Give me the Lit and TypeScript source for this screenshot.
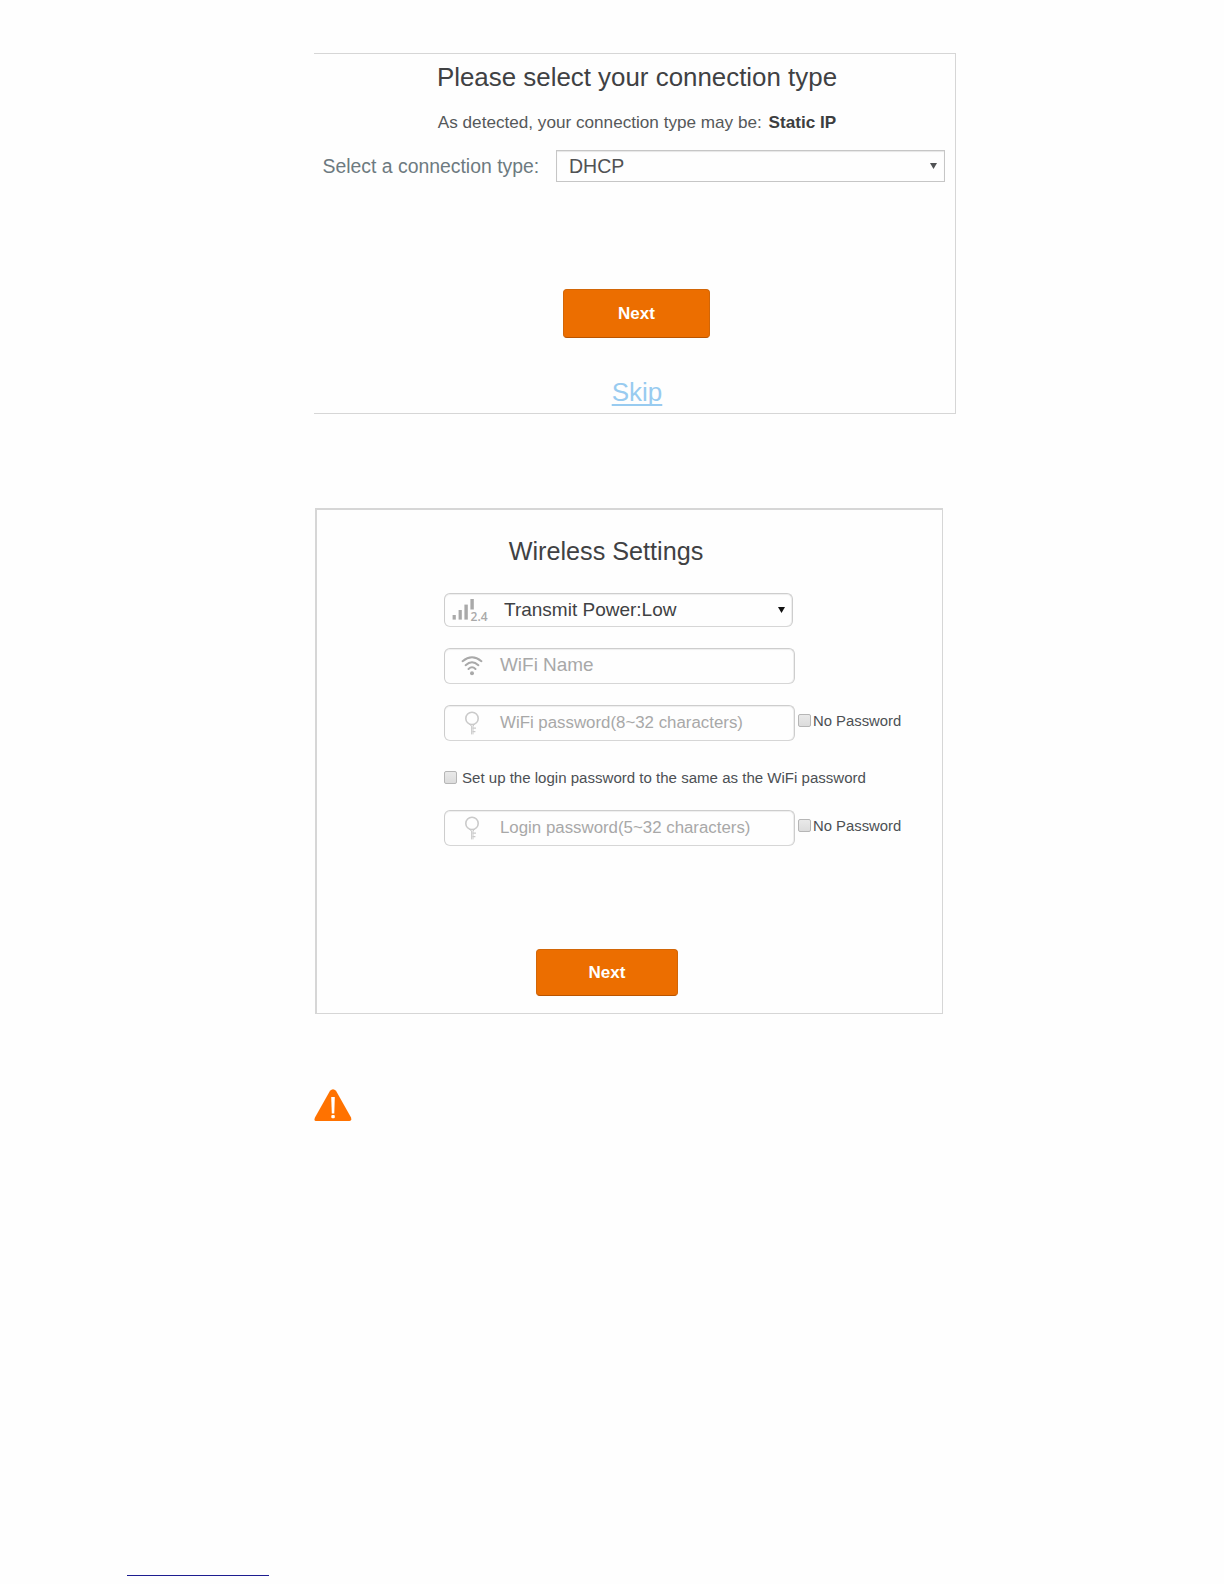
import { LitElement, html, css, svg } from "lit";
import { customElement, property } from "lit/decorators.js";

const signalIcon = svg`<svg class="signal" width="38" height="32" viewBox="0 -3 38 32">
  <g fill="#a9a9a9">
    <rect x="0.6" y="18" width="3.2" height="4.6" /><rect x="6.6" y="13" width="3.2" height="9.6" />
    <rect x="12.4" y="7.6" width="3.4" height="15" /><rect x="18.4" y="2" width="3.4" height="10.5" />
    <text x="18.6" y="23.6" font-family="Open Sans, sans-serif" font-size="12" font-weight="600" textLength="17">2.4</text>
  </g></svg>`;

const wifiIcon = svg`<svg width="22" height="20" viewBox="0 0 22 20">
  <g fill="none" stroke="#a9a9a9" stroke-width="2" stroke-linecap="round">
    <path d="M1.6 5.2Q11 -2.6 20.4 5.2" /><path d="M4.6 9.2Q11 3.4 17.4 9.2" /><path d="M7.5 13Q11 9.6 14.5 13" />
  </g><circle cx="11" cy="17.2" r="2" fill="#a9a9a9" /></svg>`;

const keyIcon = svg`<svg width="16" height="24" viewBox="0 0 16 24">
  <g fill="none" stroke="#cacaca">
    <circle cx="8" cy="7.4" r="6.2" stroke-width="1.6" />
    <path d="M5.2 13.2L7.6 15V23.4M10.8 13.2L9 15V23.4" stroke-width="1" /><path d="M8.5 17.2H12M8.5 20.6H11.4" stroke-width="1.3" />
  </g></svg>`;

const arrow = svg`<svg class="arrow" width="7" height="6" viewBox="0 0 7 6"><path d="M0 0H7L3.5 6Z" fill="currentColor" /></svg>`;

@customElement("check-label")
class CheckLabel extends LitElement {
  @property() label = "";
  @property({ type: Number }) gap = 2;
  static styles = css`
    :host { display: flex; align-items: center; font-size: 14.85px; line-height: 20px; color: #4c5054; white-space: nowrap; }
    .box { width: 13px; height: 13px; margin-bottom: 1px; box-sizing: border-box; border: 1px solid #b6b6b6; border-radius: 2px; background: linear-gradient(#e9e9e9, #dcdcdc); }
  `;
  render() {
    return html`<span class="box"></span><span style="margin-left:${this.gap}px">${this.label}</span>`;
  }
}

@customElement("app-root")
class AppRoot extends LitElement {
  static styles = css`
    :host { display: block; box-sizing: border-box; width: 1224px; height: 1584px; padding-top: 53px; overflow: hidden;
      background: #fefefe; font-family: "Liberation Sans", Arial, sans-serif; color: #404143; white-space: nowrap; }
    svg { display: block; flex: none; }
    .card { display: flex; flex-direction: column; box-sizing: border-box; border: 1px solid #d6d6d6; }
    .connection { width: 642px; height: 361px; margin-left: 314px; padding: 8px 0 0 5px; border-left: 0; align-items: center; }
    h1 { margin: 0; font-weight: 400; font-size: 25.9px; line-height: 30px; }
    .detected { margin-top: 20px; font-size: 17.15px; line-height: 20px; color: #55585a; }
    .detected b { margin-left: 2px; color: #3c3e40; }
    .type-row { display: flex; align-items: center; align-self: stretch; margin: 18px 10px 0 3px; }
    .type-label { width: 233.5px; padding-left: 0.5px; font-size: 19.4px; color: #6d7a80; }
    .type-select { flex: 1; display: flex; align-items: center; box-sizing: border-box; height: 32px; padding: 0 7px 0 12px;
      border: 1px solid #c6c6c6; box-shadow: inset 0 1px 1px #e6e6e6; font-size: 19.5px; color: #505254; }
    .type-select span, .power span { flex: 1; }
    .next { display: flex; align-items: center; justify-content: center; box-sizing: border-box; width: 147px; height: 49px;
      border: 1px solid #d26607; border-bottom-color: #b95400; border-radius: 4px; background: #ec6e00; color: #fff; font: bold 17px "Liberation Sans", Arial, sans-serif; padding: 0; }
    .connection .next { margin-top: 107px; margin-right: 1px; }
    .skip { margin-top: 39px; font-size: 26px; line-height: 30px; color: #98cbf0; text-decoration: underline; text-decoration-thickness: 2px; text-underline-offset: 3px; text-decoration-skip-ink: none; }
    .wireless { width: 628px; height: 506px; margin: 94px 0 0 315px; padding: 26px 0 0 127px; border-top-width: 2px; border-left-width: 2px; }
    .wireless h1 { width: 324px; text-align: center; font-size: 25.2px; }
    .field { display: flex; align-items: center; box-sizing: border-box; width: 351px; height: 36px; border: 1px solid #cdcdcd; border-bottom-color: #d6d6d6;
      border-radius: 6px; box-shadow: inset 0 1px 1px #eee, inset -1px 0 0 #eee; font-size: 16.85px; color: #a8a8a8; }
    .power { width: 349px; height: 34px; margin-top: 27px; padding: 0 7px 0 7px; font-size: 19px; color: #3f4143; }
    .power span { margin-left: 14px; }
    .power .arrow { color: #111; }
    .name { margin-top: 21px; padding-left: 16px; font-size: 18.95px; }
    .name span { margin-left: 17px; padding-bottom: 3px; }
    .secret { padding-left: 19px; }
    .secret span { margin-left: 20px; padding-bottom: 1px; }
    .line { display: flex; margin-top: 21px; }
    .line check-label { margin: 0 0 4px 3px; }
    .same { margin-top: 27px; font-size: 15.06px; }
    .line.login { margin-top: 22px; }
    .wireless .next { width: 142px; height: 47px; margin: 103px 0 0 92px; }
    .warning { margin: 75px 0 0 314px; }
    .link-rule { width: 142px; height: 1px; margin: 454px 0 0 127px; background: #1d1d90; }
  `;

  secretRow(hint: string, cls = "") {
    return html`<div class="line ${cls}">
      <div class="field secret">${keyIcon}<span>${hint}</span></div>
      <check-label label="No Password"></check-label>
    </div>`;
  }

  render() {
    return html`
      <section class="card connection">
        <h1>Please select your connection type</h1>
        <div class="detected">As detected, your connection type may be: <b>Static IP</b></div>
        <div class="type-row">
          <div class="type-label">Select a connection type:</div>
          <div class="type-select"><span>DHCP</span>${arrow}</div>
        </div>
        <button class="next">Next</button>
        <a class="skip">Skip</a>
      </section>
      <section class="card wireless">
        <h1>Wireless Settings</h1>
        <div class="field power">${signalIcon}<span>Transmit Power:Low</span>${arrow}</div>
        <div class="field name">${wifiIcon}<span>WiFi Name</span></div>
        ${this.secretRow("WiFi password(8~32 characters)")}
        <check-label class="same" gap="5" label="Set up the login password to the same as the WiFi password"></check-label>
        ${this.secretRow("Login password(5~32 characters)", "login")}
        <button class="next">Next</button>
      </section>
      <svg class="warning" width="38" height="32" viewBox="0 0 38 32">
        <path d="M16 1.8Q19 -1.2 22 1.8L37 28.5Q38 32 35.5 32H2Q-0.5 32 1 28.5Z" fill="#ff7200" />
        <path d="M17.2 8H20.8L20.3 24.5H17.8Z" fill="#fff" /><rect x="17.3" y="26" width="3.5" height="3.2" rx="1" fill="#fff" />
      </svg>
      <div class="link-rule"></div>
    `;
  }
}
